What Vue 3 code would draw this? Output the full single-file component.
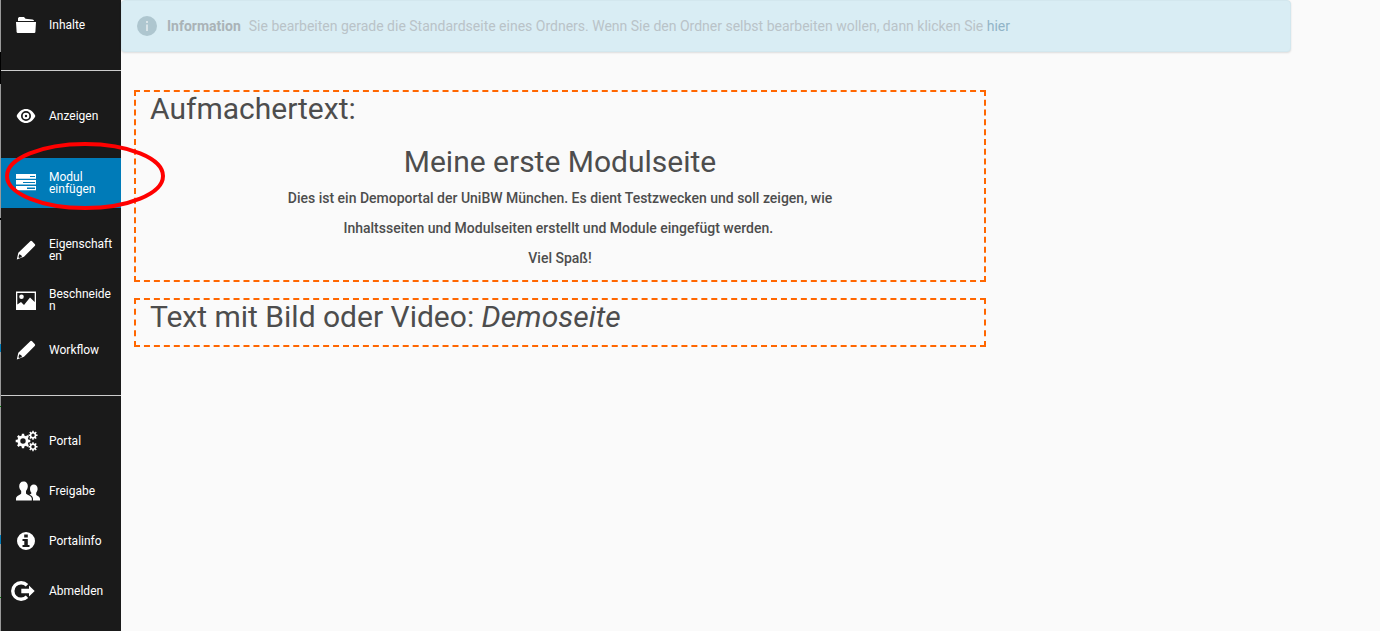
<script setup>
const groups = [
  [{ label: 'Inhalte', icon: 'folder' }],
  [
    { label: 'Anzeigen', icon: 'eye' },
    { label: 'Modul einfügen', icon: 'tasks', active: true },
    { label: 'Eigenschaften', icon: 'pencil' },
    { label: 'Beschneiden', icon: 'image' },
    { label: 'Workflow', icon: 'pencil' },
  ],
  [
    { label: 'Portal', icon: 'cogs' },
    { label: 'Freigabe', icon: 'users' },
    { label: 'Portalinfo', icon: 'info' },
    { label: 'Abmelden', icon: 'logout' },
  ],
]

function gear(cx, cy, outer, inner, teeth) {
  const points = []
  const step = (Math.PI * 2) / teeth
  for (let i = 0; i < teeth; i++) {
    const a = i * step
    for (const [offset, r] of [[-0.29, inner], [-0.2, outer], [0.2, outer], [0.29, inner]]) {
      const t = a + offset * step
      points.push(`${(cx + r * Math.cos(t)).toFixed(2)} ${(cy + r * Math.sin(t)).toFixed(2)}`)
    }
  }
  return `M${points.join('L')}Z`
}

function hole(cx, cy, r) {
  return `M${cx - r} ${cy}a${r} ${r} 0 1 0 ${2 * r} 0a${r} ${r} 0 1 0 ${-2 * r} 0Z`
}

const cogs =
  gear(7, 10, 7.4, 5.7, 8) + hole(7, 10, 2.7) +
  gear(17, 4.3, 4.6, 3.4, 8) + hole(17, 4.3, 1.7) +
  gear(17, 15.7, 4.6, 3.4, 8) + hole(17, 15.7, 1.7)
</script>

<template>
  <div class="page">
    <nav class="toolbar" aria-label="Bearbeiten">
      <ul v-for="(group, g) in groups" :key="g" class="group">
        <li v-for="item in group" :key="item.label" :class="{ active: item.active }">
          <a href="#" class="item">
            <svg class="icon" viewBox="0 0 20 20" aria-hidden="true">
              <g v-if="item.icon === 'folder'">
                <path d="M2 5V3.2L3 2H8L9.5 3.8L16.5 4.6Q18 4.9 18 6H2Z" />
                <path d="M0 7H20L19.4 17Q19.3 18 18.3 18H1.7Q.7 18 .6 17Z" />
              </g>
              <path
                v-else-if="item.icon === 'eye'"
                fill-rule="evenodd"
                d="M.6 10C2.800 5.200 6.100 3 10 3s7.200 2.200 9.400 7C17.200 14.800 13.900 17 10 17S2.800 14.800.6 10ZM10 5a5 5 0 1 0 0 10a5 5 0 1 0 0-10ZM10 6.700a3.300 3.300 0 1 1 0 6.600a3.300 3.300 0 1 1 0-6.600ZM10 8.800a1.200 1.200 0 1 0 0 2.400a1.200 1.200 0 1 0 0-2.400Z"
              />
              <path
                v-else-if="item.icon === 'tasks'"
                fill-rule="evenodd"
                d="M0 1H20V5.700H0ZM14 3V4H19V3ZM0 7H20V11.500H0ZM7 9V10H19V9ZM0 13H20V17.300H0ZM11 14.500V16H19V14.500Z"
              />
              <path
                v-else-if="item.icon === 'pencil'"
                fill-rule="evenodd"
                d="M14 1.400Q15 .4 16.100 1.300L18.700 3.900Q19.700 5 18.700 6L8 16.700L.8 19.600L2.300 12.800ZM3.300 14.300L2.400 17.200L3.300 18.100L6 16.900L5.300 15.300Z"
              />
              <path
                v-else-if="item.icon === 'image'"
                fill-rule="evenodd"
                d="M0 1.500H20V20H0ZM1.300 3V14.500L5 12L8 15L14 7.500L18.700 12V3ZM5.500 4.500a2.300 2.300 0 1 1 0 4.600a2.300 2.300 0 1 1 0-4.600Z"
              />
              <path v-else-if="item.icon === 'cogs'" fill-rule="evenodd" :d="cogs" />
              <g v-else-if="item.icon === 'users'">
                <path d="M7.500.500C10.300.500 12 2.600 11.800 5.600C11.700 7.400 10.900 8.800 10 10V12.500C11 14 15.500 14.600 15.800 17.500V19.500H0V17.500C.3 14.600 4.300 14 5.200 12.500V10C4.100 8.800 3.300 7.400 3.200 5.600C3.100 2.600 4.700.500 7.500.500Z" />
                <path d="M17.800 3.500C20 3.500 21.700 5.200 21.600 8C21.500 9.600 20.900 10.800 20.200 11.700V13.800C21 15 23.800 15.500 24 17.800V19.500H17V17.500C16.700 15.400 15.200 14.300 13.500 13.500C14.500 13.300 15.300 13 15.300 12.600V11.600C14.600 10.700 14 9.600 14 8C13.900 5.200 15.600 3.500 17.800 3.500Z" />
              </g>
              <path
                v-else-if="item.icon === 'info'"
                fill-rule="evenodd"
                d="M10 1a9 9 0 1 0 0 18a9 9 0 1 0 0-18ZM8.200 3.500H11.800V6.500H8.200ZM6.500 8H11.800V14H13.500V16H6.500V14H8.300V10H6.500Z"
              />
              <g v-else>
                <path class="arc" d="M11 4.200A8.300 8.300 0 1 0 11 15.800" />
                <path d="M5.300 7.800H13V4.500L18.700 10L13 15.500V12.200H5.300Z" />
              </g>
            </svg>
            <span class="label">{{ item.label }}</span>
          </a>
        </li>
      </ul>
    </nav>

    <main class="content">
      <div class="notice" role="status">
        <svg class="notice-icon" viewBox="0 0 20 20" aria-hidden="true">
          <circle cx="10" cy="10" r="10" />
          <path d="M9 5H11V7H9ZM9 8.500H11V15H9Z" />
        </svg>
        <strong>Information</strong>
        <span>Sie bearbeiten gerade die Standardseite eines Ordners. Wenn Sie den Ordner selbst bearbeiten wollen, dann klicken Sie <a href="#">hier</a></span>
      </div>

      <div class="modules">
        <section class="module">
          <h2>Aufmachertext:</h2>
          <div class="teaser">
            <h2>Meine erste Modulseite</h2>
            <p>
              Dies ist ein Demoportal der UniBW München. Es dient Testzwecken und soll zeigen, wie<br />
              Inhaltsseiten und Modulseiten erstellt und Module eingefügt werden.&nbsp;<br />
              Viel Spaß!
            </p>
          </div>
        </section>
        <section class="module">
          <h2>Text mit Bild oder Video: <em>Demoseite</em></h2>
        </section>
      </div>
    </main>

    <svg class="marker" viewBox="0 0 160 68" aria-hidden="true">
      <ellipse cx="80" cy="34" rx="78" ry="32" />
    </svg>
  </div>
</template>

<style>
body {
  background: #fafafa;
}
</style>

<style scoped>
.page {
  position: relative;
  display: flex;
  min-height: 100vh;
  font-family: Roboto, "Liberation Sans", sans-serif;
  color: #4d4d4d;
}

.toolbar {
  flex: none;
  box-sizing: border-box;
  width: 121px;
  padding-left: 1px;
  background:
    linear-gradient(
      #999 52px, #000 52px 84px, #999 84px 218px, #000 218px 220px,
      #999 220px 344px, #007bb8 344px 352px, #999 352px 406px, #080 406px 407px,
      #999 407px 535px, #007bb8 535px 544px, #999 544px 597px, #080 597px 598px, #999 598px
    ) left / 1px 100% no-repeat,
    #1a1a1a;
}

.group {
  margin: 0;
  padding: 20px 0;
  list-style: none;
}

.group:first-child {
  padding-top: 0;
}

.group + .group {
  border-top: 1px solid #ccc;
}

.item {
  display: flex;
  align-items: center;
  gap: 13px;
  height: 50px;
  padding: 0 8px 0 15px;
  color: #fff;
  font-size: 12px;
  line-height: 12px;
  text-decoration: none;
}

.active {
  margin: 17px 0;
  background: #007bb8;
}

.icon {
  flex: none;
  width: 20px;
  height: 20px;
  overflow: visible;
  fill: #fff;
}

.arc {
  fill: none;
  stroke: #fff;
  stroke-width: 3.4;
}

.label {
  min-width: 0;
  overflow-wrap: anywhere;
}

.content {
  flex: 1;
  min-width: 0;
}

.notice {
  display: flex;
  align-items: center;
  box-sizing: border-box;
  max-width: 1170px;
  min-height: 52px;
  padding: 0 15px;
  border: 1px solid #d3e7ee;
  border-radius: 4px;
  background: #d9edf4;
  box-shadow: 0 1px 2px rgba(0, 0, 0, 0.12);
  color: #b9c3c8;
  font-size: 14px;
  line-height: 20px;
}

.notice-icon {
  flex: none;
  width: 20px;
  height: 20px;
  margin-right: 10px;
}

.notice-icon circle {
  fill: #aec6cf;
}

.notice-icon path {
  fill: #d9e4e8;
}

.notice strong {
  margin-right: 8px;
  color: #aab3b7;
}

.notice a {
  color: #91b4c7;
  text-decoration: none;
}

.modules {
  display: flex;
  flex-direction: column;
  gap: 16px;
  max-width: 852px;
  margin: 38px 13px 0;
}

.module {
  padding: 0 14px 12px;
  border: 2px dashed #f60;
}

.module:first-child {
  padding-bottom: 7px;
}

h2 {
  margin: 0;
  font-size: 30px;
  font-weight: 400;
  line-height: 33px;
}

.teaser {
  margin-top: 20px;
  text-align: center;
}

.teaser p {
  margin: 5px 0 0;
  font-size: 14px;
  font-weight: 500;
  line-height: 30px;
}

.marker {
  position: absolute;
  top: 142px;
  left: 5px;
  width: 160px;
  height: 68px;
  pointer-events: none;
}

.marker ellipse {
  fill: none;
  stroke: #f00;
  stroke-width: 4;
}
</style>
